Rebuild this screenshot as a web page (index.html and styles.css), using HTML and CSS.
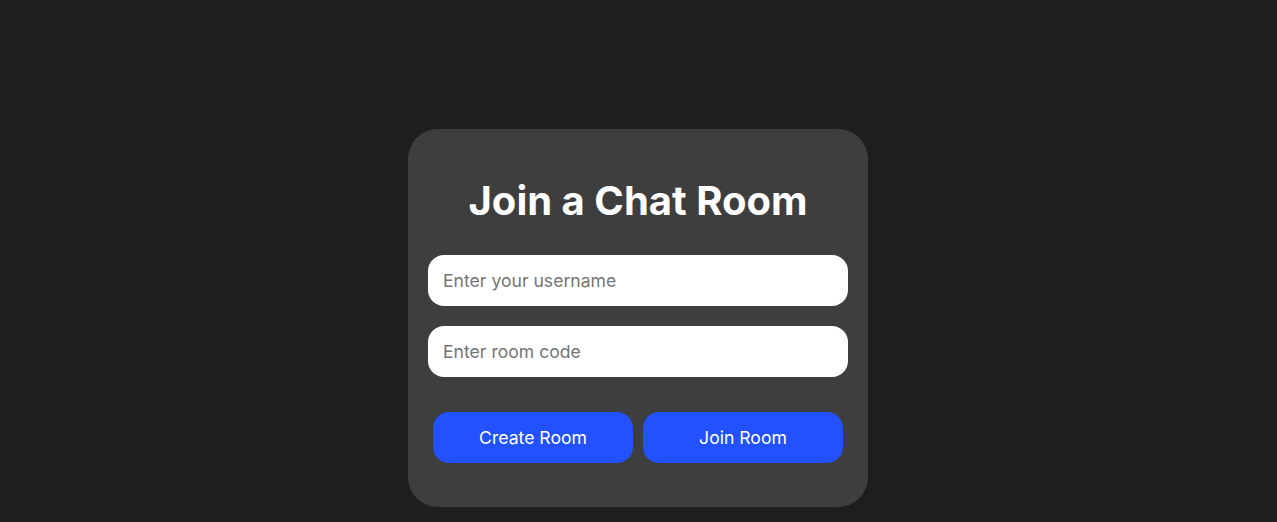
FILE: index.html
```html
<!DOCTYPE html>
<html lang="en">
<head>
<meta charset="utf-8">
<title>Join a Chat Room</title>
<link rel="stylesheet" href="styles.css">
</head>
<body>
<main class="page">
  <section class="card">
    <h1 class="title">Join a Chat Room</h1>
    <input class="field" type="text" placeholder="Enter your username">
    <input class="field field-second" type="text" placeholder="Enter room code">
    <div class="actions">
      <button class="btn" type="button">Create Room</button>
      <button class="btn" type="button">Join Room</button>
    </div>
  </section>
</main>
</body>
</html>
```
FILE: styles.css
```css
html, body {
  margin: 0;
  padding: 0;
}
body {
  background: #1e1e1e;
  font-family: Inter, "Noto Sans", sans-serif;
  color: #fff;
}
.page {
  display: flex;
  justify-content: center;
  padding-top: 129px;
  padding-right: 1px;
}
.card {
  box-sizing: border-box;
  width: 460px;
  height: 378px;
  background: #3e3e3e;
  border-radius: 30px;
  padding: 48px 20px 44px;
  display: flex;
  flex-direction: column;
}
.title {
  margin: 0 0 30px;
  font-size: 40px;
  font-weight: 700;
  line-height: 48px;
  text-align: center;
  color: #fff;
}
.field {
  box-sizing: border-box;
  width: 420px;
  height: 51px;
  border: none;
  border-radius: 16px;
  background: #fff;
  padding: 0 15px;
  font-family: Inter, "Noto Sans", sans-serif;
  font-size: 17.6px;
  color: #222;
  outline: none;
}
.field::placeholder {
  color: #757575;
}
.field-second {
  margin-top: 20px;
}
.actions {
  display: flex;
  gap: 10px;
  padding: 0 5px;
  margin-top: 35px;
}
.btn {
  width: 200px;
  height: 51px;
  border: none;
  border-radius: 16px;
  background: #2251ff;
  color: #fff;
  font-family: Inter, "Noto Sans", sans-serif;
  font-size: 17.6px;
  cursor: pointer;
}
```
